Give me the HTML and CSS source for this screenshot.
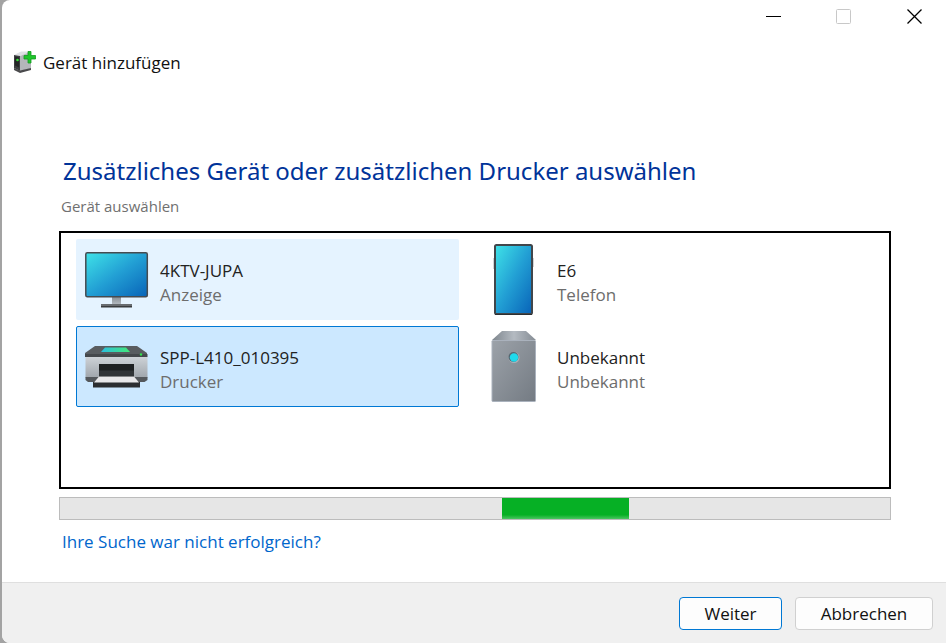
FILE: index.html
```html
<!DOCTYPE html>
<html lang="de">
<head>
  <meta charset="UTF-8">
  <meta name="viewport" content="width=device-width, initial-scale=1.0">
  <title>Gerät hinzufügen</title>
  <link rel="stylesheet" href="styles.css">
</head>
<body>
  <div class="window">
    <div class="titlebar">
      <button class="caption-btn" aria-label="Minimieren">
        <svg width="15" height="15" viewBox="0 0 15 15"><path d="M0 7.5h15" stroke="#000" fill="none"/></svg>
      </button>
      <button class="caption-btn" aria-label="Maximieren" disabled>
        <svg width="15" height="15" viewBox="0 0 15 15"><rect x="0.5" y="0.5" width="14" height="14" rx="1" stroke="#c8c8c8" fill="none"/></svg>
      </button>
      <button class="caption-btn" aria-label="Schließen">
        <svg width="15" height="15" viewBox="0 0 15 15"><path d="M0.5 0.5l14 14M14.5 0.5l-14 14" stroke="#000" stroke-width="1.3" fill="none"/></svg>
      </button>
    </div>

    <div class="app-title">
      <svg width="24" height="24" viewBox="0 0 24 24">
        <path d="M1 4l7-3.5h10L7 5z" fill="#dfe1e4"/>
        <path d="M1 4l6 1v15l-6-3z" fill="#3c3e40"/>
        <path d="M7 5l11-4.5v17L7 20z" fill="#b4b6ba"/>
        <path d="M1 17l6 2.5 11-2.5v2L7 22l-6-3z" fill="#4a4a4c"/>
        <path d="M2 5.500l4 1v10l-4-2z" fill="#242626"/>
        <circle cx="4.5" cy="9" r="1.3" fill="#35e335"/>
        <path d="M15 0.5h3v4h4.500v3.500h-4.500v4h-3v-4h-4v-3.500h4z" fill="#1fc52b" stroke="#139a20" stroke-width="0.8"/>
      </svg>
      <span>Gerät hinzufügen</span>
    </div>

    <main class="content">
      <h1>Zusätzliches Gerät oder zusätzlichen Drucker auswählen</h1>
      <p class="hint">Gerät auswählen</p>

      <div class="devices">
        <button class="device hover">
          <svg class="device-icon" width="64" height="72" viewBox="0 0 64 72">
            <defs>
              <linearGradient id="screen" x1="0" y1="0" x2="1" y2="1">
                <stop offset="0" stop-color="#3fe3e8"/>
                <stop offset="0.5" stop-color="#229fd4"/>
                <stop offset="1" stop-color="#0863b8"/>
              </linearGradient>
              <linearGradient id="stand" x1="0" y1="0" x2="0" y2="1">
                <stop offset="0" stop-color="#858b91"/>
                <stop offset="1" stop-color="#b6bdc4"/>
              </linearGradient>
            </defs>
            <rect x="27" y="52" width="9" height="9" fill="url(#stand)"/>
            <rect x="16" y="60" width="31" height="2" fill="#686c70"/>
            <rect x="16" y="62" width="31" height="1.5" fill="#3a3c3e"/>
            <rect x="0.8" y="8.8" width="61.5" height="44" rx="1.5" fill="url(#screen)" stroke="#464b50" stroke-width="1.5"/>
          </svg>
          <span class="device-text">
            <span class="device-name">4KTV-JUPA</span>
            <span class="device-type">Anzeige</span>
          </span>
        </button>
        <button class="device">
          <svg class="device-icon" width="64" height="72" viewBox="0 0 64 72">
            <path d="M12 14v11M51 14v9" stroke="#a4a8ac" stroke-width="1"/>
            <rect x="13" y="1" width="37" height="69" rx="1.5" fill="url(#screen)" stroke="#41464b" stroke-width="2"/>
            <path d="M13 70.5h37" stroke="#2c2f32" stroke-width="1"/>
          </svg>
          <span class="device-text">
            <span class="device-name">E6</span>
            <span class="device-type">Telefon</span>
          </span>
        </button>
        <button class="device selected">
          <svg class="device-icon" width="64" height="72" viewBox="0 0 64 72">
            <defs>
              <linearGradient id="printer" x1="0" y1="0" x2="0" y2="1">
                <stop offset="0" stop-color="#cdd2d7"/>
                <stop offset="1" stop-color="#9fa5ab"/>
              </linearGradient>
              <linearGradient id="panel" x1="0" y1="0" x2="1" y2="0">
                <stop offset="0" stop-color="#2bbfe0"/>
                <stop offset="1" stop-color="#42e878"/>
              </linearGradient>
            </defs>
            <path d="M10 15h42l10 7v3H0v-3z" fill="#585c60"/>
            <path d="M0 23h62.5v3h-62.5z" fill="#44484c"/>
            <path d="M20 16.5h21l4 4.5H16z" fill="url(#panel)"/>
            <circle cx="56" cy="23.5" r="1.2" fill="#2fe34b"/>
            <rect x="0.5" y="26" width="62" height="21" fill="url(#printer)"/>
            <path d="M0.5 46h62v3l-3 2H3l-2.5-2z" fill="#54585c"/>
            <path d="M14 33h35v14H14z" fill="#1d2022"/>
            <path d="M14 39.5h35v5.5H14z" fill="#303437"/>
            <path d="M8 51h47v5.5H8z" fill="#2b2e31"/>
            <path d="M14 45.5h35l5 6H9z" fill="#e8e8ea"/>
          </svg>
          <span class="device-text">
            <span class="device-name">SPP-L410_010395</span>
            <span class="device-type">Drucker</span>
          </span>
        </button>
        <button class="device">
          <svg class="device-icon" width="64" height="72" viewBox="0 0 64 72">
            <defs>
              <linearGradient id="tower" x1="0" y1="0" x2="1" y2="1">
                <stop offset="0" stop-color="#9ca2a9"/>
                <stop offset="1" stop-color="#747b83"/>
              </linearGradient>
              <linearGradient id="towerTop" x1="0" y1="0" x2="1" y2="0">
                <stop offset="0" stop-color="#7e868e"/>
                <stop offset="0.5" stop-color="#b4bac1"/>
                <stop offset="1" stop-color="#858c94"/>
              </linearGradient>
            </defs>
            <path d="M20 0h24l10 9H10z" fill="url(#towerTop)"/>
            <rect x="10" y="9.5" width="43.5" height="61" rx="0.8" fill="url(#tower)" stroke="#aab2bd" stroke-width="1"/>
            <circle cx="32" cy="26.5" r="5.5" fill="#aab2ba"/>
            <circle cx="31.5" cy="26" r="5" fill="#566570"/>
            <circle cx="32" cy="26.5" r="4.2" fill="#1fd9ec"/>
          </svg>
          <span class="device-text">
            <span class="device-name">Unbekannt</span>
            <span class="device-type">Unbekannt</span>
          </span>
        </button>
      </div>

      <div class="progress" role="progressbar" aria-label="Suche nach Geräten">
        <div class="progress-chunk"></div>
      </div>

      <a class="help-link" href="#">Ihre Suche war nicht erfolgreich?</a>
    </main>

    <footer class="footer">
      <button class="btn btn-primary">Weiter</button>
      <button class="btn">Abbrechen</button>
    </footer>
  </div>
</body>
</html>
```

FILE: styles.css
```css
* { box-sizing: border-box; }
body {
  margin: 0;
  padding-left: 2px;
  background: #a3a3a3;
  font-family: "Open Sans", sans-serif;
  font-size: 17px;
  line-height: 24px;
  color: #111;
}
button {
  font: inherit;
  color: inherit;
}
.window {
  display: flex;
  flex-direction: column;
  min-height: 100vh;
  background: #fff;
  border-radius: 8px 0 0 8px;
  overflow: hidden;
}
.titlebar {
  display: flex;
  justify-content: flex-end;
}
.caption-btn {
  display: flex;
  align-items: center;
  justify-content: center;
  width: 70px;
  height: 33px;
  padding: 0;
  background: none;
  border: none;
}
.caption-btn:last-child {
  width: 68px;
  padding-left: 4px;
}
.app-title {
  display: flex;
  align-items: center;
  gap: 6px;
  padding: 18px 11px 0;
}
.content {
  flex: 1;
  padding: 79px 55px 24px 57px;
}
h1 {
  margin: 0 0 8px 4px;
  font-family: "Noto Sans", sans-serif;
  font-size: 24px;
  line-height: 34px;
  font-weight: 400;
  color: #003399;
}
.hint {
  margin: 0 0 15px 2px;
  font-size: 15px;
  line-height: 20px;
  color: #707070;
}
.devices {
  display: grid;
  grid-template-columns: 1fr 1fr;
  align-content: start;
  gap: 6px 14px;
  min-height: 258px;
  padding: 6px 33px 6px 15px;
  border: 2px solid #000;
}
.device {
  display: flex;
  align-items: center;
  gap: 11px;
  height: 81px;
  padding: 0 8px;
  background: none;
  border: 1px solid transparent;
  border-radius: 2px;
  text-align: left;
}
.device.hover {
  background: #e5f3ff;
}
.device.selected {
  background: #cce8ff;
  border-color: #0078d4;
}
.device-icon {
  flex: none;
}
.device-text {
  display: flex;
  flex-direction: column;
  padding-top: 6px;
}
.device-name {
  color: #222;
}
.device-type {
  color: #6d6d6d;
}
.progress {
  height: 23px;
  margin: 8px 0 10px;
  background: #e6e6e6;
  border: 1px solid #bcbcbc;
}
.progress-chunk {
  width: 15.3%;
  height: 100%;
  margin-left: 53.3%;
  background: linear-gradient(#06b025 80%, #4cc562);
}
.help-link {
  margin-left: 3px;
  color: #0066cc;
  text-decoration: none;
}
.footer {
  display: flex;
  justify-content: flex-end;
  gap: 13px;
  padding: 14px 13px 13px;
  background: #f0f0f0;
  border-top: 1px solid #dfdfdf;
}
.btn {
  min-width: 138px;
  height: 33px;
  padding: 0 12px;
  background: #fdfdfd;
  border: 1px solid #d0d0d0;
  border-radius: 4px;
}
.btn-primary {
  min-width: 103px;
  border-color: #0078d4;
}
```
